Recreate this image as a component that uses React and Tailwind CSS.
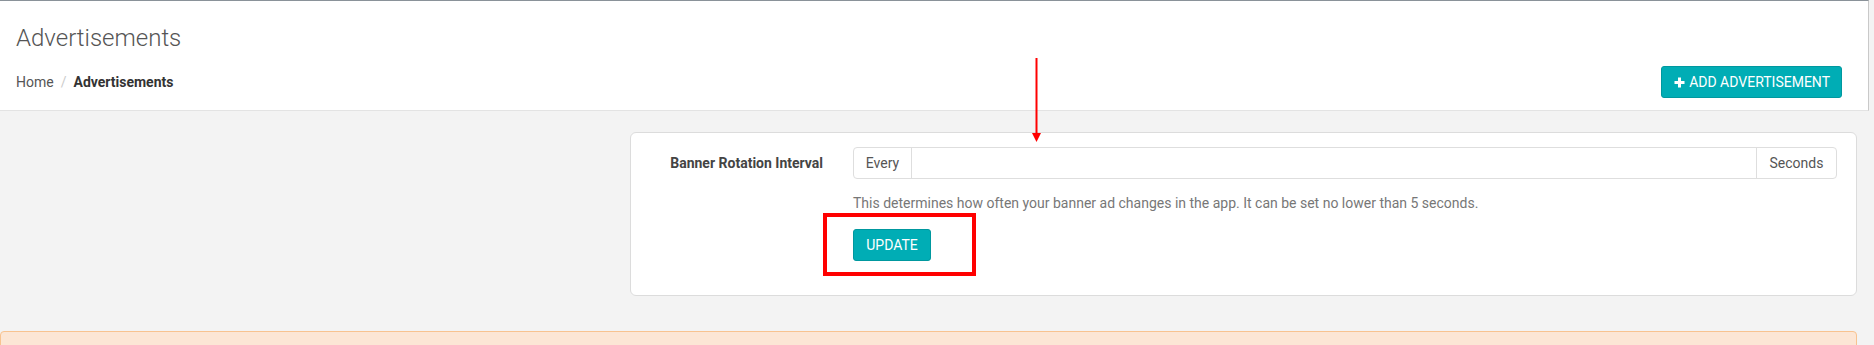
import { Plus } from "lucide-react";

export default function App() {
    return (
        <div className="w-[1874px] h-[345px] overflow-hidden bg-[#f3f3f3] relative font-['Roboto',sans-serif]">

            {/* PAGE HEADER */}
            <div className="w-[1869px] h-[111px] bg-white border-t border-b border-r border-t-[#8a9299] border-b-[#e3e3e3] border-r-[#c9c9c9] pl-4 pr-[26px] pt-[24px]">
                <h1 className="text-[24px] leading-[26px] font-light text-[#555]">Advertisements</h1>
                <div className="flex items-center justify-between mt-[15px]">
                    <div className="flex items-center text-[14px] leading-5">
                        <span className="text-[#555]">Home</span>
                        <span className="text-[#ccc] px-[7px]">/</span>
                        <span className="font-bold text-[#333]">Advertisements</span>
                    </div>
                    <button className="h-[32px] flex items-center gap-[4px] bg-[#00adb5] border border-[#00989f] rounded-[3px] pl-[12px] pr-[11px] text-white text-[14px] uppercase">
                        <svg width="11" height="11" viewBox="0 0 11 11" className="shrink-0">
                            <path d="M5.5 0.5v10M0.5 5.5h10" stroke="white" strokeWidth="3" />
                        </svg>
                        Add Advertisement
                    </button>
                </div>
            </div>

            {/* CONTENT */}
            <div className="pt-[21px] pr-[17px]">
                <div className="pl-[630px]">
                    <div className="bg-white border border-[#dcdcdc] rounded-[6px] flex pt-[14px] pb-[34px] pr-[19px]">
                        <div className="w-[222px] h-[32px] pr-[30px] flex items-center justify-end text-[14px] font-bold text-[#444]">
                            Banner Rotation Interval
                        </div>
                        <div className="flex-1">
                            <div className="flex h-[32px] border border-[#dedede] rounded-[4px] text-[14px] text-[#555]">
                                <div className="w-[58px] flex items-center justify-center border-r border-[#dedede]">Every</div>
                                <input className="flex-1 outline-none px-3 bg-white" />
                                <div className="w-[80px] flex items-center justify-center border-l border-[#dedede]">Seconds</div>
                            </div>
                            <p className="mt-[14px] text-[14px] leading-5 text-[#777]">
                                This determines how often your banner ad changes in the app. It can be set no lower than 5 seconds.
                            </p>
                            <button className="mt-[16px] w-[78px] h-[32px] bg-[#00adb5] border border-[#00989f] rounded-[3px] text-white text-[14px] uppercase">
                                Update
                            </button>
                        </div>
                    </div>
                </div>

                {/* ALERT BAND */}
                <div className="mt-[35px] h-[40px] bg-[#fce6d5] border border-[#f8c390] rounded-[4px]" />
            </div>

            {/* ANNOTATIONS */}
            <div className="absolute left-[823px] top-[213px] w-[153px] h-[63px] border-[4px] border-[#ff0000]" />
            <svg className="absolute left-[1031px] top-[57px]" width="11" height="86" viewBox="0 0 11 86">
                <path d="M5.5 1v76" stroke="#ff0000" strokeWidth="2" />
                <path d="M1 76h9l-4.5 9z" fill="#ff0000" />
            </svg>
        </div>
    );
}
